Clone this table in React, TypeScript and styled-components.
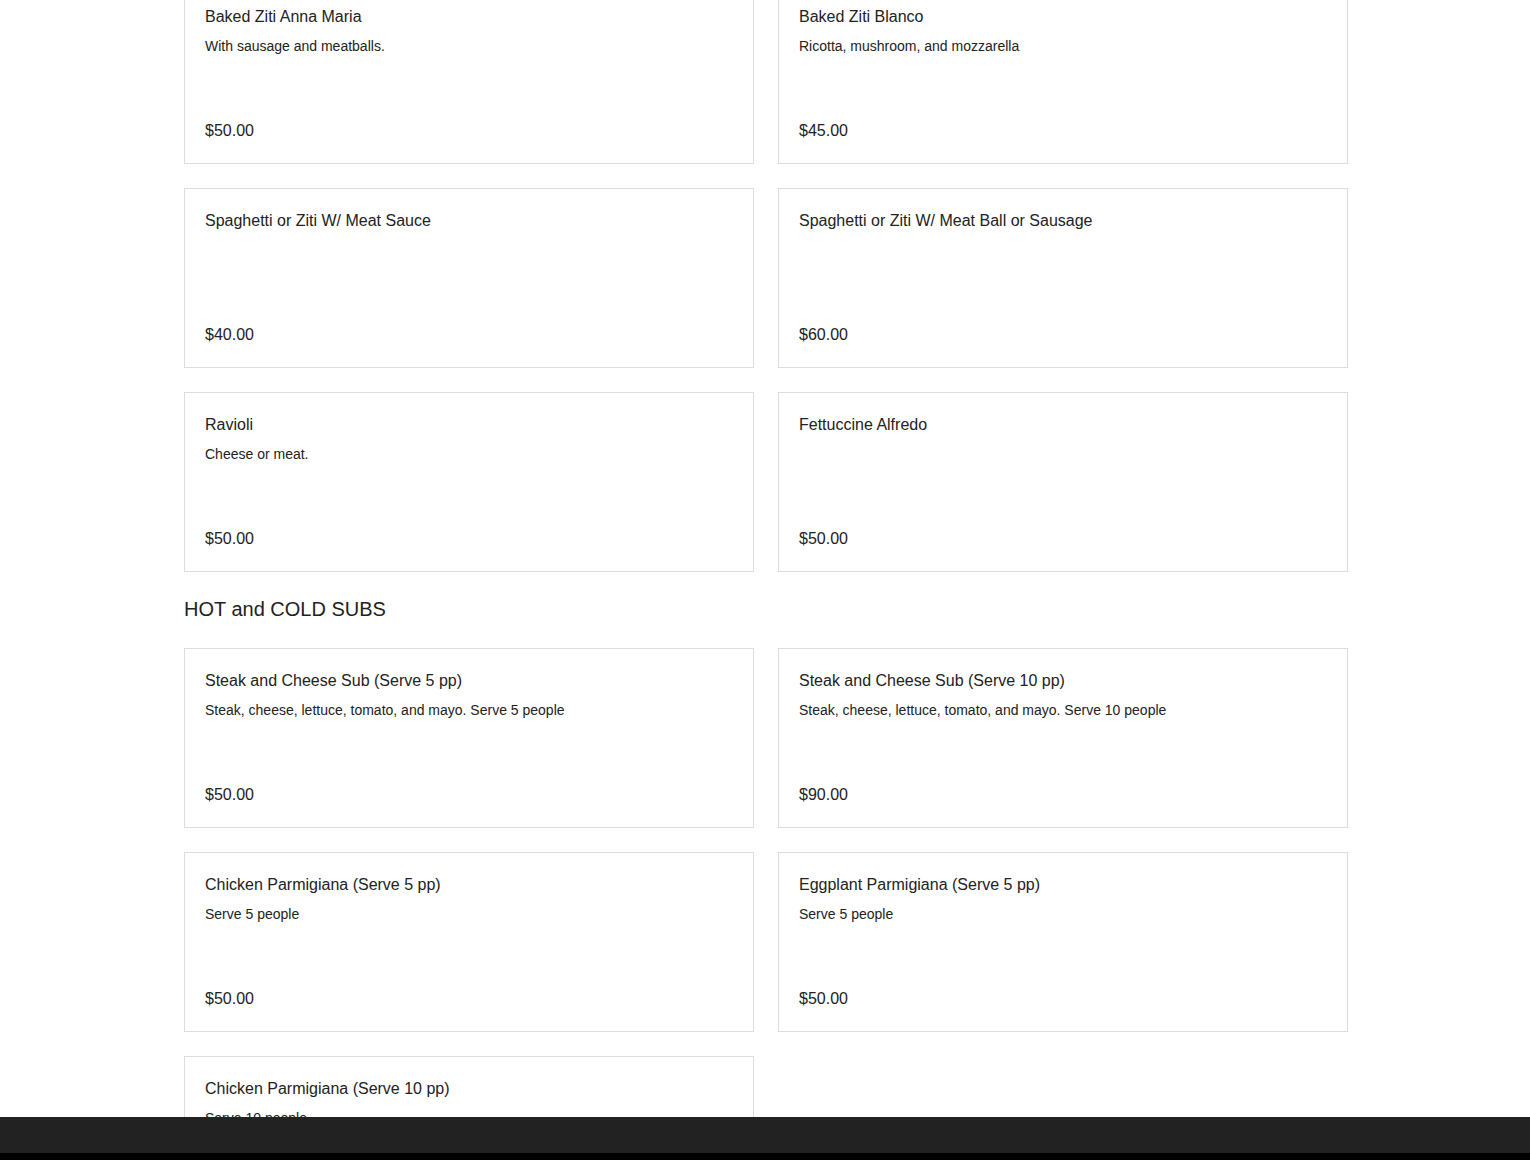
import styled, { createGlobalStyle } from 'styled-components';

const GlobalStyle = createGlobalStyle`
    html, body {
        margin: 0;
        padding: 0;
        background: #fff;
    }
    body {
        font-family: "Liberation Sans", Arial, Helvetica, sans-serif;
        color: #222;
        overflow: hidden;
    }
`;

const Page = styled.main`
    width: 1164px;
    margin: -16px 0 0 calc(50% - 581px);
    padding-bottom: 80px;
`;

const Section = styled.section`
    display: flex;
    flex-direction: column;
`;

const SectionTitle = styled.h2`
    margin: 22px 0 24px;
    font-size: 20px;
    line-height: 30px;
    font-weight: 400;
    color: #222;
`;

const Grid = styled.div`
    display: grid;
    grid-template-columns: repeat(2, 570px);
    gap: 24px;
`;

const Card = styled.article`
    box-sizing: border-box;
    height: 180px;
    border: 1px solid #ddd;
    padding: 21px 20px 20px;
    display: flex;
    flex-direction: column;
`;

const ItemName = styled.h3`
    margin: 0;
    font-size: 16px;
    line-height: 22px;
    font-weight: 400;
    color: #222;
`;

const ItemDesc = styled.p`
    margin: 8px 0 0;
    font-size: 14px;
    line-height: 20px;
    color: #222;
`;

const Price = styled.span`
    margin-top: auto;
    font-size: 16px;
    line-height: 24px;
`;

const BottomBar = styled.footer`
    position: fixed;
    left: 0;
    right: 0;
    bottom: 0;
    height: 36px;
    background: #222;
    border-bottom: 7px solid #000;
`;

type Item = { name: string; desc?: string; price: string };

const pasta: Item[] = [
    { name: 'Baked Ziti Anna Maria', desc: 'With sausage and meatballs.', price: '$50.00' },
    { name: 'Baked Ziti Blanco', desc: 'Ricotta, mushroom, and mozzarella', price: '$45.00' },
    { name: 'Spaghetti or Ziti W/ Meat Sauce', price: '$40.00' },
    { name: 'Spaghetti or Ziti W/ Meat Ball or Sausage', price: '$60.00' },
    { name: 'Ravioli', desc: 'Cheese or meat.', price: '$50.00' },
    { name: 'Fettuccine Alfredo', price: '$50.00' },
];

const subs: Item[] = [
    { name: 'Steak and Cheese Sub (Serve 5 pp)', desc: 'Steak, cheese, lettuce, tomato, and mayo. Serve 5 people', price: '$50.00' },
    { name: 'Steak and Cheese Sub (Serve 10 pp)', desc: 'Steak, cheese, lettuce, tomato, and mayo. Serve 10 people', price: '$90.00' },
    { name: 'Chicken Parmigiana (Serve 5 pp)', desc: 'Serve 5 people', price: '$50.00' },
    { name: 'Eggplant Parmigiana (Serve 5 pp)', desc: 'Serve 5 people', price: '$50.00' },
    { name: 'Chicken Parmigiana (Serve 10 pp)', desc: 'Serve 10 people', price: '$90.00' },
];

function MenuCard({ item }: { item: Item }) {
    return (
        <Card>
            <ItemName>{item.name}</ItemName>
            {item.desc && <ItemDesc>{item.desc}</ItemDesc>}
            <Price>{item.price}</Price>
        </Card>
    );
}

export default function App() {
    return (
        <>
            <GlobalStyle />
            <Page>
                <Section>
                    <Grid>
                        {pasta.map((it) => (
                            <MenuCard key={it.name} item={it} />
                        ))}
                    </Grid>
                </Section>
                <Section>
                    <SectionTitle>HOT and COLD SUBS</SectionTitle>
                    <Grid>
                        {subs.map((it) => (
                            <MenuCard key={it.name} item={it} />
                        ))}
                    </Grid>
                </Section>
            </Page>
            <BottomBar />
        </>
    );
}
